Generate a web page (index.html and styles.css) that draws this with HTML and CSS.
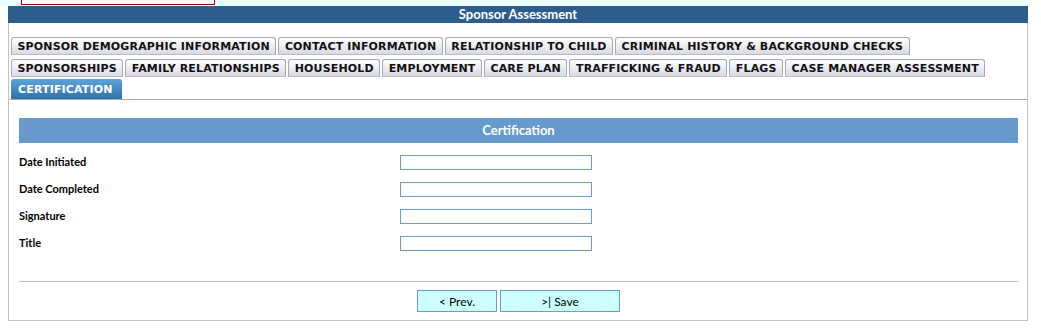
FILE: index.html
```html
<!DOCTYPE html>
<html lang="en">
<head>
  <meta charset="UTF-8">
  <title>Sponsor Assessment</title>
  <link rel="stylesheet" href="styles.css">
</head>
<body>
  <div class="top-strip">
    <div class="search-box"></div>
  </div>

  <div class="panel">
    <div class="panel-title">Sponsor Assessment</div>
    <div class="panel-body">

      <div class="tabs">
        <div class="tab-row row-1">
          <a class="tab" href="#">SPONSOR DEMOGRAPHIC INFORMATION</a>
          <a class="tab" href="#">CONTACT INFORMATION</a>
          <a class="tab" href="#">RELATIONSHIP TO CHILD</a>
          <a class="tab" href="#">CRIMINAL HISTORY &amp; BACKGROUND CHECKS</a>
        </div>
        <div class="tab-row row-2">
          <a class="tab" href="#">SPONSORSHIPS</a>
          <a class="tab" href="#">FAMILY RELATIONSHIPS</a>
          <a class="tab" href="#">HOUSEHOLD</a>
          <a class="tab" href="#">EMPLOYMENT</a>
          <a class="tab" href="#">CARE PLAN</a>
          <a class="tab" href="#">TRAFFICKING &amp; FRAUD</a>
          <a class="tab" href="#">FLAGS</a>
          <a class="tab" href="#">CASE MANAGER ASSESSMENT</a>
        </div>
        <div class="tab-row row-3">
          <a class="tab active" href="#">CERTIFICATION</a>
        </div>
      </div>

      <div class="section">
        <div class="section-title">Certification</div>

        <div class="form">
          <div class="form-row">
            <label for="dateInitiated">Date Initiated</label>
            <input type="text" id="dateInitiated">
          </div>
          <div class="form-row">
            <label for="dateCompleted">Date Completed</label>
            <input type="text" id="dateCompleted">
          </div>
          <div class="form-row">
            <label for="signature">Signature</label>
            <input type="text" id="signature">
          </div>
          <div class="form-row">
            <label for="title">Title</label>
            <input type="text" id="title">
          </div>
        </div>

        <div class="actions">
          <button class="btn btn-prev" type="button">&lt; Prev.</button>
          <button class="btn btn-save" type="button">&gt;| Save</button>
        </div>
      </div>

    </div>
  </div>
</body>
</html>
```

FILE: styles.css
```css
body {
  margin: 0;
  background: #fff;
  font-family: "Lato", "Liberation Sans", sans-serif;
  color: #000;
}

.top-strip {
  width: 1028px;
  height: 6px;
  background: #eaffff;
}

.search-box {
  margin-left: 21px;
  width: 192px;
  height: 4px;
  background: #fff;
  border: 1px solid #a00000;
  border-top: none;
}

.panel {
  margin: 0 8px;
  width: 1020px;
}

.panel-title {
  height: 17px;
  line-height: 17px;
  background: #2d5d8b;
  color: #fff;
  font-weight: bold;
  font-size: 13px;
  text-align: center;
}

.panel-body {
  height: 297px;
  border: 1px solid #c0c0c0;
  border-top: none;
}

/* tabs */
.tabs {
  padding: 14px 0 0 2px;
  border-bottom: 1px solid #a8a8a8;
}

.tab-row {
  display: flex;
  gap: 2px;
}

.row-1 { margin-bottom: 4px; }
.row-2 { margin-bottom: 2px; }

.tab {
  display: block;
  height: 16px;
  line-height: 17px;
  padding: 0 5.5px;
  border: 1px solid #a3a9b4;
  border-bottom-color: #b8bcc4;
  border-radius: 3px 3px 0 0;
  background: linear-gradient(#ffffff, #d9d9e5);
  font-family: "DejaVu Sans", Verdana, sans-serif;
  font-weight: bold;
  font-size: 11px;
  letter-spacing: 0.15px;
  color: #111;
  text-decoration: none;
  white-space: nowrap;
}

.tab.active {
  height: 20px;
  line-height: 21px;
  border: none;
  padding: 0 9px 0 7px;
  background: linear-gradient(#5ba3db, #2f72ab);
  color: #fff;
}

/* certification section */
.section {
  margin: 18px 9px 0 10px;
}

.section-title {
  height: 25px;
  line-height: 25px;
  background: #6699cc;
  color: #fff;
  font-weight: bold;
  font-size: 13px;
  text-align: center;
}

.form {
  padding-top: 6px;
}

.form-row {
  display: flex;
  align-items: center;
  height: 27px;
}

.form-row label {
  width: 381px;
  margin-bottom: 3px;
  font-size: 11px;
  font-weight: bold;
}

.form-row input {
  box-sizing: border-box;
  width: 192px;
  height: 15px;
  margin: 0;
  padding: 0 2px;
  border: 1px solid #6b9bd0;
  background: #fff;
}

.actions {
  display: flex;
  justify-content: center;
  gap: 3px;
  margin-top: 24px;
  padding-top: 8px;
  border-top: 1px solid #c0c0c0;
}

.btn {
  height: 22px;
  padding: 0;
  background: #ccffff;
  border: 1px solid #6b9bd0;
  font-family: "Lato", "Liberation Sans", sans-serif;
  font-size: 12px;
  color: #000;
}

.btn-prev { width: 80px; }
.btn-save { width: 120px; }

.btn:hover {
  background: #b3f0ff;
}
```
